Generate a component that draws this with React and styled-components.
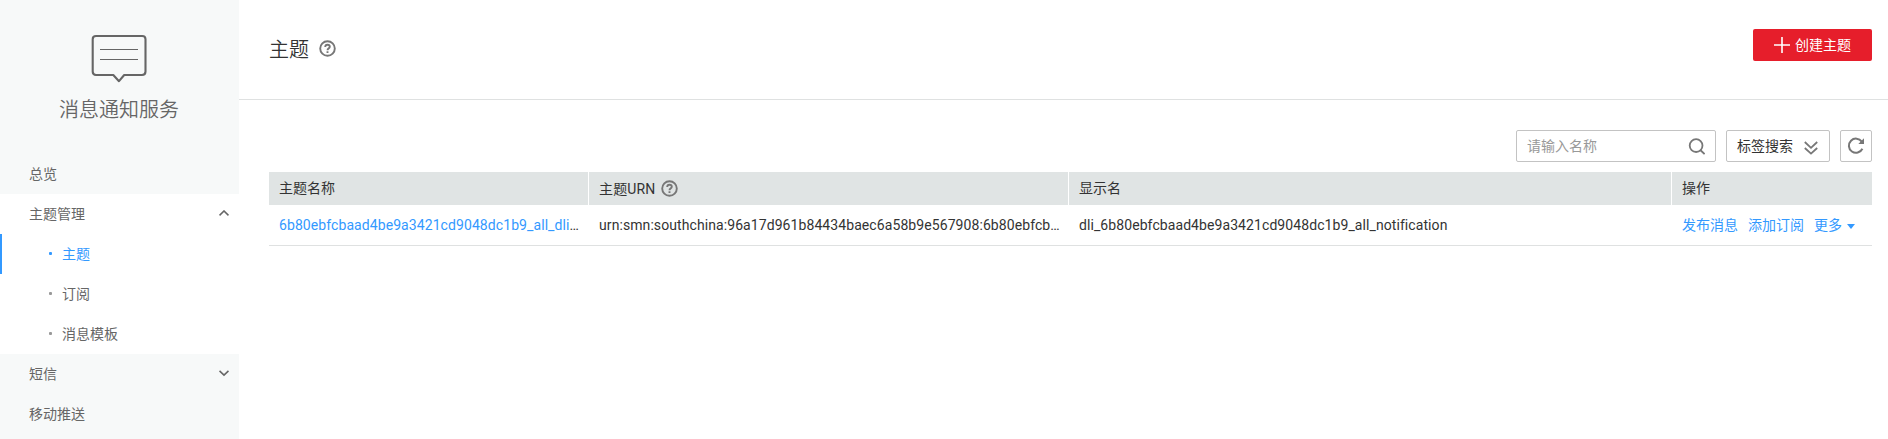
import React from "react";
import styled, { createGlobalStyle } from "styled-components";

const GlobalStyle = createGlobalStyle`
  * { box-sizing: border-box; }
  body {
    margin: 0;
    background: #fff;
    color: #333;
    font-family: Roboto, "Noto Sans CJK SC", sans-serif;
    font-size: 14px;
    line-height: 20px;
  }
`;

const Page = styled.div`
  display: flex;
  height: 439px;
  overflow: hidden;
`;

const Sidebar = styled.nav`
  flex: 0 0 239px;
  background: #f7f9f9;
  color: #666;
`;

const Brand = styled.div`
  display: flex;
  flex-direction: column;
  align-items: center;
  height: 154px;
  padding: 34px 1px 0 0;
`;

const BrandName = styled.div`
  margin-top: 11px;
  font-family: "Noto Sans CJK SC", sans-serif;
  font-size: 20px;
  font-weight: 350;
  line-height: 28px;
`;

const MenuItem = styled.div`
  display: flex;
  align-items: center;
  justify-content: space-between;
  height: 40px;
  padding: 0 10px 1px 29px;
`;

const MenuGroup = styled.div`
  background: #fff;
`;

const SubItem = styled.div`
  display: flex;
  align-items: center;
  gap: 10px;
  height: 40px;
  padding: 0 0 1px 47px;
  border-left: 2px solid ${(p) => (p.$active ? "#3399ff" : "transparent")};
  color: ${(p) => (p.$active ? "#3399ff" : "#666")};
  &::before {
    content: "";
    width: 3px;
    height: 3px;
    border-radius: 1px;
    background: ${(p) => (p.$active ? "#3399ff" : "#999")};
  }
`;

const Main = styled.main`
  flex: 1;
  min-width: 0;
`;

const Header = styled.header`
  display: flex;
  align-items: center;
  justify-content: space-between;
  height: 100px;
  padding: 0 16px 9px 30px;
  border-bottom: 1px solid #dfe1e1;
`;

const Title = styled.h1`
  display: flex;
  align-items: center;
  gap: 10px;
  margin: 0;
  padding-top: 7px;
  font-family: "Noto Sans CJK SC", sans-serif;
  font-size: 20px;
  font-weight: 350;
  line-height: 28px;
`;

const CreateButton = styled.button`
  display: flex;
  align-items: center;
  justify-content: center;
  gap: 5px;
  width: 119px;
  height: 32px;
  padding: 0;
  border: 0;
  border-radius: 2px;
  background: #e61e2b;
  color: #fff;
  font: inherit;
`;

const Content = styled.section`
  padding: 30px 16px 0 30px;
`;

const Toolbar = styled.div`
  display: flex;
  justify-content: flex-end;
  gap: 10px;
  margin-bottom: 10px;
`;

const Control = styled.div`
  display: flex;
  align-items: center;
  justify-content: ${(p) => (p.$center ? "center" : "space-between")};
  width: ${(p) => p.$width}px;
  height: 32px;
  padding: 0 ${(p) => (p.$center ? 0 : 10)}px;
  border: 1px solid #c3c3c3;
  border-radius: 2px;
`;

const SearchInput = styled.input`
  width: 140px;
  padding: 0;
  border: 0;
  outline: 0;
  font: inherit;
  &::placeholder { color: #999; }
`;

const Table = styled.table`
  width: 1603px;
  table-layout: fixed;
  border-collapse: separate;
  border-spacing: 0;
`;

const HeadCell = styled.th`
  width: ${(p) => p.$width}px;
  height: 33px;
  padding: 0 10px ${(p) => (p.$withIcon ? 0 : 2)}px;
  border-right: ${(p) => (p.$last ? 0 : 1)}px solid #fff;
  background: #e0e4e4;
  font-weight: 400;
  text-align: left;
`;

const HeadLabel = styled.span`
  display: flex;
  align-items: center;
  gap: 5px;
  letter-spacing: 0.16px;
`;

const Cell = styled.td`
  height: 41px;
  padding: 0 10px;
  border-bottom: 1px solid #dfe1e1;
  letter-spacing: ${(p) => (p.$actions ? 0 : 0.083)}px;
  white-space: nowrap;
`;

const Link = styled.a`
  color: #3399ff;
`;

const Actions = styled.div`
  display: flex;
  align-items: center;
  gap: 10px;
`;

const MoreLink = styled(Link)`
  display: flex;
  align-items: center;
  gap: 5px;
`;

const MessageIcon = () => (
  <svg width="56" height="50" viewBox="0 0 56 50" fill="none" stroke="#666">
    <path d="M5 2H51.2Q54.5 2 54.5 5.3V37.5Q54.5 41 51 41H33.2L28 47.2L22.3 41H5Q1.7 41 1.7 37.5V5.3Q1.7 2 5 2Z" strokeWidth="2.1" strokeLinejoin="round" />
    <path d="M9 15.5H47M9 25.5H47" strokeWidth="1.2" />
  </svg>
);

const HelpIcon = () => (
  <svg width="17" height="17" viewBox="0 0 17 17" fill="none" stroke="#777" strokeWidth="1.9">
    <circle cx="8.5" cy="8.5" r="7.3" />
    <path d="M6.2 7.1Q6.2 4.7 8.5 4.7T10.8 6.8Q10.8 7.6 9.7 8.4Q8.5 9.1 8.5 10.3M8.5 11.2V13" />
  </svg>
);

const Chevron = ({ up }) => (
  <svg width="10" height="7" viewBox="0 0 10 7" fill="none" stroke="#666" strokeWidth="1.6">
    <path d={up ? "M.5 5.3L5 1L9.5 5.3" : "M.5 .9L5 5.2L9.5 .9"} />
  </svg>
);

const PlusIcon = () => (
  <svg width="16" height="16" viewBox="0 0 16 16" stroke="#fff" strokeWidth="1.6">
    <path d="M0 8H16M8 0V16" />
  </svg>
);

const SearchIcon = () => (
  <svg width="17" height="17" viewBox="0 0 17 17" fill="none" stroke="#777" strokeWidth="1.8">
    <circle cx="8.1" cy="7.6" r="6.4" />
    <path d="M12.3 12L16.6 16.2" />
  </svg>
);

const DoubleChevron = () => (
  <svg width="15" height="17" viewBox="0 0 15 17" fill="none" stroke="#777" strokeWidth="1.8">
    <path d="M.8 4L7 9.8L13.2 4M.8 10L7 15.6L13.2 10" />
  </svg>
);

const RefreshIcon = () => (
  <svg width="18" height="18" viewBox="0 0 18 18" fill="none" stroke="#777" strokeWidth="2">
    <path d="M14.8 4.6A7.1 7.1 0 1 0 15.4 11.8" />
    <path d="M17 1.3V7H11.3Z" fill="#777" stroke="none" />
  </svg>
);

const CaretIcon = () => (
  <svg width="8" height="7" viewBox="0 0 8 7">
    <path d="M0 2H8L4 7Z" fill="#3399ff" />
  </svg>
);

export default function App() {
  return (
    <Page>
      <GlobalStyle />
      <Sidebar>
        <Brand>
          <MessageIcon />
          <BrandName>消息通知服务</BrandName>
        </Brand>
        <MenuItem>总览</MenuItem>
        <MenuGroup>
          <MenuItem>主题管理<Chevron up /></MenuItem>
          <SubItem $active>主题</SubItem>
          <SubItem>订阅</SubItem>
          <SubItem>消息模板</SubItem>
        </MenuGroup>
        <MenuItem>短信<Chevron /></MenuItem>
        <MenuItem>移动推送</MenuItem>
      </Sidebar>
      <Main>
        <Header>
          <Title>主题<HelpIcon /></Title>
          <CreateButton><PlusIcon />创建主题</CreateButton>
        </Header>
        <Content>
          <Toolbar>
            <Control $width={200}>
              <SearchInput placeholder="请输入名称" />
              <SearchIcon />
            </Control>
            <Control $width={104}>标签搜索<DoubleChevron /></Control>
            <Control $width={32} $center><RefreshIcon /></Control>
          </Toolbar>
          <Table>
            <thead>
              <tr>
                <HeadCell $width={320}>主题名称</HeadCell>
                <HeadCell $width={480} $withIcon><HeadLabel>主题URN<HelpIcon /></HeadLabel></HeadCell>
                <HeadCell $width={603}>显示名</HeadCell>
                <HeadCell $width={200} $last>操作</HeadCell>
              </tr>
            </thead>
            <tbody>
              <tr>
                <Cell><Link>6b80ebfcbaad4be9a3421cd9048dc1b9_all_dli</Link>…</Cell>
                <Cell>urn:smn:southchina:96a17d961b84434baec6a58b9e567908:6b80ebfcb…</Cell>
                <Cell>dli_6b80ebfcbaad4be9a3421cd9048dc1b9_all_notification</Cell>
                <Cell $actions>
                  <Actions>
                    <Link>发布消息</Link>
                    <Link>添加订阅</Link>
                    <MoreLink>更多<CaretIcon /></MoreLink>
                  </Actions>
                </Cell>
              </tr>
            </tbody>
          </Table>
        </Content>
      </Main>
    </Page>
  );
}
